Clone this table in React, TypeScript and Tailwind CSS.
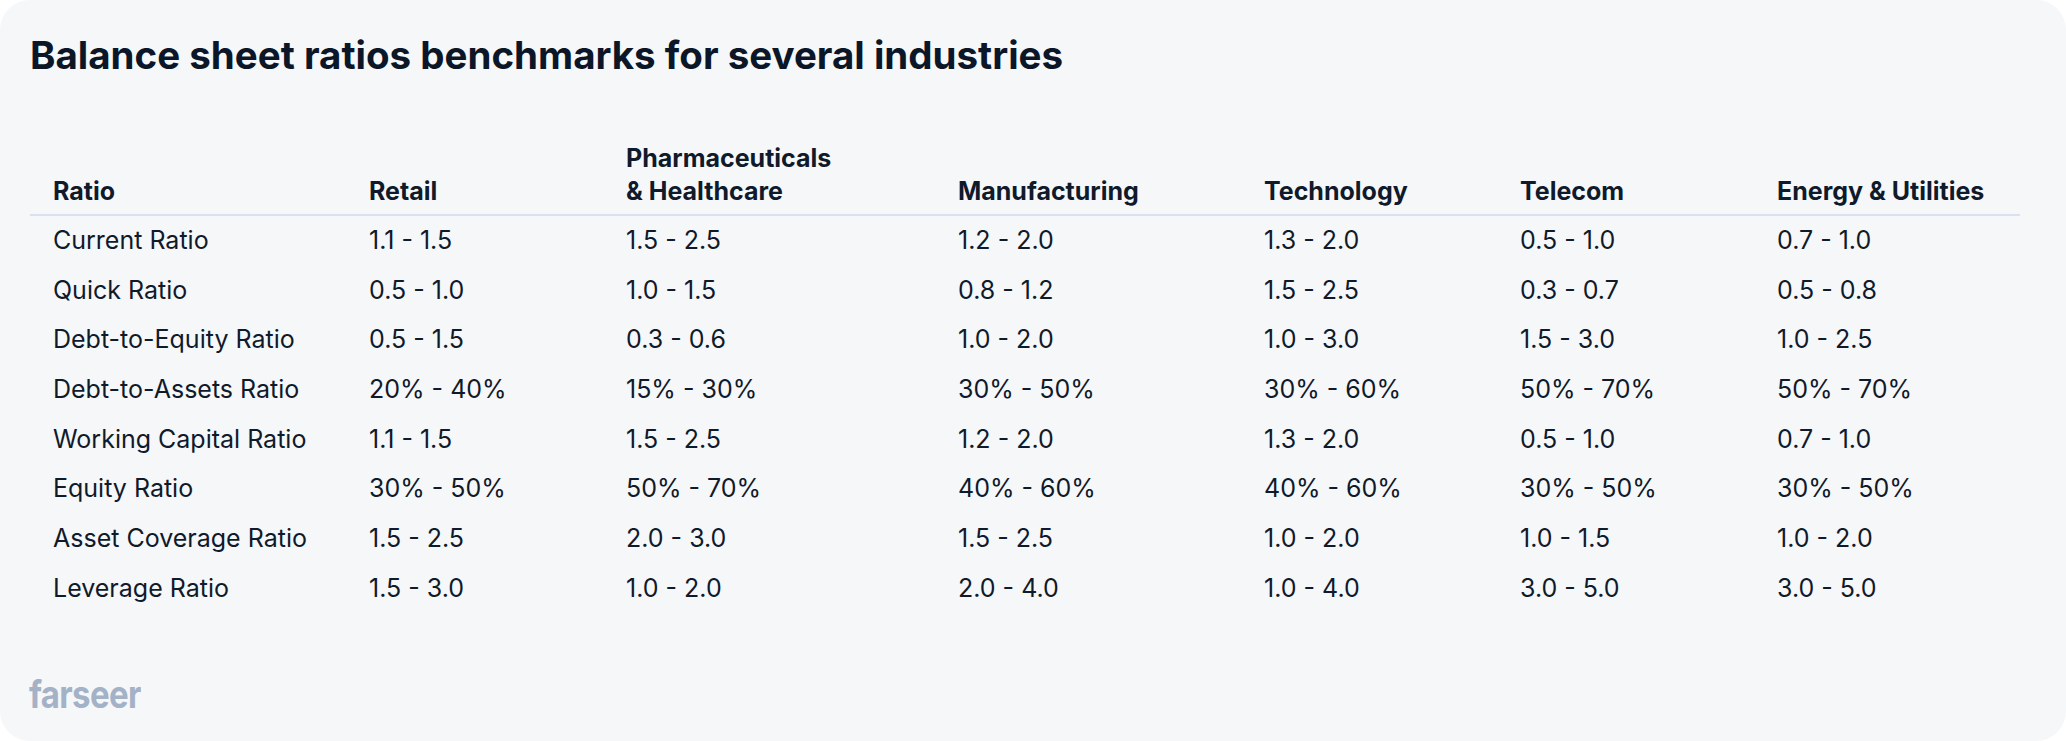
import React from "react";

const industries = [
  { key: "retail", label: ["Retail"] },
  { key: "pharma", label: ["Pharmaceuticals", "& Healthcare"] },
  { key: "manufacturing", label: ["Manufacturing"] },
  { key: "technology", label: ["Technology"] },
  { key: "telecom", label: ["Telecom"] },
  { key: "energy", label: ["Energy & Utilities"] },
];

const rows: { name: string; values: string[] }[] = [
  { name: "Current Ratio", values: ["1.1 - 1.5", "1.5 - 2.5", "1.2 - 2.0", "1.3 - 2.0", "0.5 - 1.0", "0.7 - 1.0"] },
  { name: "Quick Ratio", values: ["0.5 - 1.0", "1.0 - 1.5", "0.8 - 1.2", "1.5 - 2.5", "0.3 - 0.7", "0.5 - 0.8"] },
  { name: "Debt-to-Equity Ratio", values: ["0.5 - 1.5", "0.3 - 0.6", "1.0 - 2.0", "1.0 - 3.0", "1.5 - 3.0", "1.0 - 2.5"] },
  { name: "Debt-to-Assets Ratio", values: ["20% - 40%", "15% - 30%", "30% - 50%", "30% - 60%", "50% - 70%", "50% - 70%"] },
  { name: "Working Capital Ratio", values: ["1.1 - 1.5", "1.5 - 2.5", "1.2 - 2.0", "1.3 - 2.0", "0.5 - 1.0", "0.7 - 1.0"] },
  { name: "Equity Ratio", values: ["30% - 50%", "50% - 70%", "40% - 60%", "40% - 60%", "30% - 50%", "30% - 50%"] },
  { name: "Asset Coverage Ratio", values: ["1.5 - 2.5", "2.0 - 3.0", "1.5 - 2.5", "1.0 - 2.0", "1.0 - 1.5", "1.0 - 2.0"] },
  { name: "Leverage Ratio", values: ["1.5 - 3.0", "1.0 - 2.0", "2.0 - 4.0", "1.0 - 4.0", "3.0 - 5.0", "3.0 - 5.0"] },
];

const cols = "grid grid-cols-[316px_257px_332px_306px_256px_257px_266px]";

export default function App() {
  return (
    <div className="w-[2066px] h-[741px] overflow-hidden bg-white font-['Inter','Liberation_Sans',sans-serif]">
      <div className="relative w-full h-full rounded-[30px] bg-[#f6f7f9] pt-[36px] px-[30px] text-[#0f1a2b]">
        <h1 className="text-[38.5px] leading-[38px] font-bold text-[#0b1628]">
          Balance sheet ratios benchmarks for several industries
        </h1>

        <div className="mt-[68px] w-[1990px]">
          <div className={`${cols} items-end border-b-2 border-[#d8e1ee] pb-[6px] text-[25px] leading-[33px] font-bold`}>
            <div className="pl-[23px]">Ratio</div>
            {industries.map((ind) => (
              <div key={ind.key} className="pl-[23px]">
                {ind.label.map((l) => (
                  <div key={l}>{l}</div>
                ))}
              </div>
            ))}
          </div>

          {rows.map((r) => (
            <div key={r.name} className={`${cols} h-[49.7px] text-[25px] leading-[49.7px]`}>
              <div className="pl-[23px]">{r.name}</div>
              {r.values.map((v, i) => (
                <div key={i} className="pl-[23px]">
                  {v}
                </div>
              ))}
            </div>
          ))}
        </div>

        <div className="absolute left-[29px] top-[679px] text-[33px] leading-[36px] font-bold tracking-[-0.02em] text-[#a3b2c6] origin-bottom scale-y-[1.15]">
          farseer
        </div>
      </div>
    </div>
  );
}
